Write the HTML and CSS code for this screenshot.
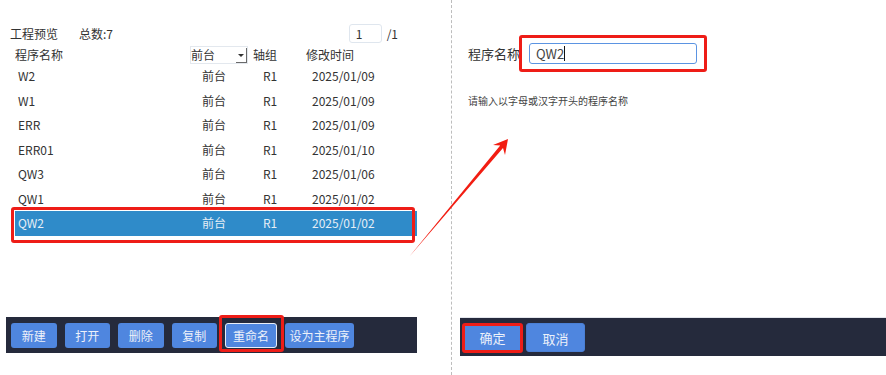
FILE: index.html
```html
<!DOCTYPE html>
<html>
	<head>
		<meta charset="UTF-8">
		<title>重命名程序</title>
		<link rel="stylesheet" href="styles.css">
	</head>
	<body>
		<div class="page">
			<section class="list-panel">
				<div class="list-head">
					<span class="title">工程预览</span>
					<span class="count">总数:7</span>
					<span class="pager"><span class="page-box">1</span><span class="page-total">/1</span></span>
				</div>
				<div class="table">
					<div class="row head">
						<span class="c-name">程序名称</span>
						<span class="c-site"><span class="select">前台<i class="drop"></i></span></span>
						<span class="c-axis">轴组</span>
						<span class="c-time">修改时间</span>
					</div>
					<div class="row"><span class="c-name">W2</span><span class="c-site">前台</span><span class="c-axis">R1</span><span class="c-time">2025/01/09</span></div>
					<div class="row"><span class="c-name">W1</span><span class="c-site">前台</span><span class="c-axis">R1</span><span class="c-time">2025/01/09</span></div>
					<div class="row"><span class="c-name">ERR</span><span class="c-site">前台</span><span class="c-axis">R1</span><span class="c-time">2025/01/09</span></div>
					<div class="row"><span class="c-name">ERR01</span><span class="c-site">前台</span><span class="c-axis">R1</span><span class="c-time">2025/01/10</span></div>
					<div class="row"><span class="c-name">QW3</span><span class="c-site">前台</span><span class="c-axis">R1</span><span class="c-time">2025/01/06</span></div>
					<div class="row"><span class="c-name">QW1</span><span class="c-site">前台</span><span class="c-axis">R1</span><span class="c-time">2025/01/02</span></div>
					<div class="row now"><span class="c-name">QW2</span><span class="c-site">前台</span><span class="c-axis">R1</span><span class="c-time">2025/01/02</span><span class="mark mark-row"></span></div>
				</div>
				<div class="toolbar">
					<button class="btn">新建</button>
					<button class="btn">打开</button>
					<button class="btn">删除</button>
					<button class="btn">复制</button>
					<button class="btn btn-on">重命名<span class="mark mark-btn"></span></button>
					<button class="btn">设为主程序</button>
				</div>
			</section>
			<section class="edit-panel">
				<div class="form-row">
					<span class="label">程序名称</span>
					<span class="input">QW2<i class="caret"></i><span class="mark mark-input"></span></span>
				</div>
				<p class="hint">请输入以字母或汉字开头的程序名称</p>
				<div class="toolbar toolbar-edit">
					<button class="btn btn-big btn-marked">确定</button>
					<button class="btn btn-big">取消</button>
				</div>
			</section>
			<svg class="arrow" width="886" height="375" viewBox="0 0 886 375">
				<polygon points="409,257 500.2,145.5 493,145 508,139 505,155 503,147.9" fill="#f21d12"/>
			</svg>
		</div>
	</body>
</html>
```

FILE: styles.css
```css
*{margin: 0;padding: 0;box-sizing: border-box;}
body{
	font-family: "Noto Sans CJK SC", "Noto Sans", sans-serif;
	font-size: 12px;
	color: #333;
	background: #fff;
}
.page{
	position: relative;
	width: 886px;
	height: 375px;
	display: flex;
}
.list-panel{
	width: 452px;
	border-right: 1px dashed #bdbdbd;
	display: flex;
	flex-direction: column;
}
.list-head{
	display: flex;
	align-items: center;
	height: 19px;
	margin-top: 24px;
	padding: 0 53px 0 10px;
	line-height: 19px;
}
.count{
	margin-left: 21px;
}
.pager{
	margin-left: auto;
	display: flex;
	align-items: center;
}
.page-box{
	width: 33px;
	height: 19px;
	border: 1px solid #dfe6ee;
	border-radius: 3px;
	padding-left: 6px;
	line-height: 17px;
}
.page-total{
	margin-left: 5px;
}
.table{
	margin: 2px 0 0 15px;
	width: 401px;
}
.row{
	position: relative;
	display: grid;
	grid-template-columns: 175px 63px 53px 1fr;
	height: 24.5px;
	line-height: 24.5px;
	align-items: center;
}
.row.head{
	height: 19px;
	line-height: 18px;
}
.row .c-name{padding-left: 3px;}
.row .c-site{padding-left: 12px;}
.row .c-axis{padding-left: 10px;}
.row .c-time{padding-left: 6px;}
.row.head span{padding-left: 0;}
.row.head .c-name{padding-left: 0;}
.select{
	position: relative;
	display: block;
	width: 58px;
	height: 18px;
	border: 1px solid #e3e8ee;
	padding-left: 1px;
	line-height: 16px;
}
.drop{
	position: absolute;
	right: 0;
	top: 1px;
	width: 11px;
	height: 15px;
	border-right: 1px solid #6a6a6a;
	border-bottom: 1px solid #6a6a6a;
}
.drop:after{
	content: "";
	position: absolute;
	left: 2px;
	top: 6px;
	border-left: 3px solid transparent;
	border-right: 3px solid transparent;
	border-top: 3px solid #333;
}
.row.now{
	background: #2f8bc9;
	color: #e6eef6;
	width: 402px;
}
.mark{
	position: absolute;
	border: 3px solid #ee1d17;
	border-radius: 3px;
}
.mark-row{
	left: -4px;
	top: -4px;
	width: 404px;
	height: 36px;
}
.toolbar{
	display: flex;
	gap: 8px;
	align-items: flex-start;
	margin: auto 0 22px 6px;
	width: 411px;
	height: 36px;
	padding: 6px 5px;
	background: #252a3c;
}
.btn{
	position: relative;
	min-width: 45.5px;
	height: 25px;
	padding: 0 4.5px;
	border: none;
	border-radius: 3px;
	background: #4f86df;
	color: #edf1fa;
	font-family: inherit;
	font-size: 12px;
	line-height: 25px;
}
.btn-on{
	padding: 0 7px;
	border: 1.5px solid #e9eef7;
	line-height: 22px;
	height: 25px;
}
.mark-btn{
	left: -7.5px;
	top: -9.5px;
	width: 65px;
	height: 37px;
}
.edit-panel{
	flex: 1;
	display: flex;
	flex-direction: column;
}
.form-row{
	display: flex;
	align-items: center;
	margin: 43px 0 0 16px;
	height: 21px;
	font-size: 13px;
}
.input{
	position: relative;
	display: flex;
	align-items: center;
	margin-left: 9px;
	width: 168px;
	height: 21px;
	border: 1.5px solid #5b94e2;
	border-radius: 3px;
	padding-left: 6px;
	color: #444;
}
.caret{
	display: block;
	width: 1px;
	height: 15px;
	background: #111;
}
.mark-input{
	left: -11.5px;
	top: -9.5px;
	width: 188px;
	height: 37px;
}
.hint{
	margin: 30px 0 0 16px;
	font-size: 10px;
	line-height: 14px;
	color: #444;
}
.toolbar-edit{
	gap: 3px;
	margin: auto 0 19px 8px;
	width: auto;
	height: 39px;
	padding: 5px 2px;
	border-top: 1px solid #e3e6ec;
}
.btn-big{
	width: 59px;
	height: 29px;
	font-size: 13px;
	line-height: 29px;
	border: 1px solid #4a7fd4;
}
.btn-marked{
	width: 61px;
	height: 30px;
	border: 3px solid #ee1d17;
	line-height: 24px;
}
.arrow{
	position: absolute;
	left: 0;
	top: 0;
	pointer-events: none;
}
```
